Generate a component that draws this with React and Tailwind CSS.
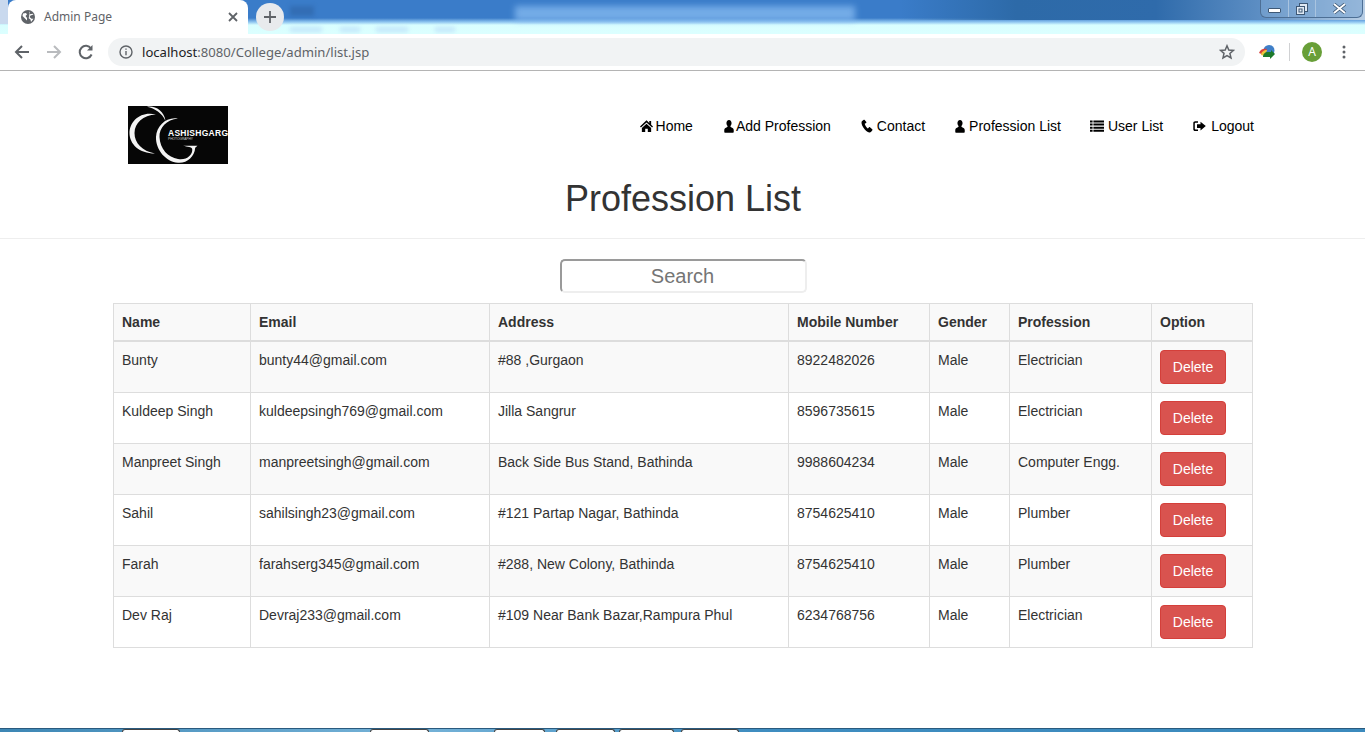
import React from "react";

const rows = [
  ["Bunty", "bunty44@gmail.com", "#88 ,Gurgaon", "8922482026", "Male", "Electrician"],
  ["Kuldeep Singh", "kuldeepsingh769@gmail.com", "Jilla Sangrur", "8596735615", "Male", "Electrician"],
  ["Manpreet Singh", "manpreetsingh@gmail.com", "Back Side Bus Stand, Bathinda", "9988604234", "Male", "Computer Engg."],
  ["Sahil", "sahilsingh23@gmail.com", "#121 Partap Nagar, Bathinda", "8754625410", "Male", "Plumber"],
  ["Farah", "farahserg345@gmail.com", "#288, New Colony, Bathinda", "8754625410", "Male", "Plumber"],
  ["Dev Raj", "Devraj233@gmail.com", "#109 Near Bank Bazar,Rampura Phul", "6234768756", "Male", "Electrician"],
];

const I = ({ children, w = 14, box = w }) => (
  <svg width={w} height="14" viewBox={`0 0 ${box} 14`} preserveAspectRatio="none" fill="#000" className="shrink-0">{children}</svg>
);
const Home = () => <I w={13} box={14}><path d="M7 1.300 0 7.500l1 1.100L7 3.400l6 5.200 1-1.100-2-1.800V2h-2v2Z" /><path d="M7 4.700 2 9v4h3.600V9.700h2.800V13H12V9Z" /></I>;
const User = () => <I w={10} box={11}><path d="M5.500 1C3.700 1 2.700 2.400 2.700 4.100c0 1.300.5 2.400 1.300 3 0 .6-.2.900-.8 1.100C1.700 8.800.3 9.300.3 11v2c0 .5.300.8.800.8h8.800c.5 0 .8-.3.800-.8v-2c0-1.700-1.400-2.200-2.900-2.800-.6-.2-.8-.5-.8-1.100.8-.6 1.300-1.700 1.300-3C8.300 2.400 7.300 1 5.500 1Z" /></I>;
const Phone = () => <I w={12} box={13}><path d="M3 .8.900 2.200C.2 3.300.5 5.700 2.500 8.500c2 2.900 4.500 4.700 6.400 4.900 1 .1 1.600-.2 2.100-.7l1.300-1.500c.3-.4.200-.7-.1-1L9.700 8.200c-.4-.2-.7-.2-1 .1L7.500 9.600C6.900 9.300 6 8.400 5.200 7.300 4.500 6.300 4.100 5.400 4 4.800l1.500-.9c.4-.2.500-.6.300-1L4 1.100C3.700.7 3.400.6 3 .8Z" /></I>;
const ListI = () => <I><path d="M0 1.500h2.600v2H0Zm3.400 0H14v2H3.400ZM0 4.600h2.600v2H0Zm3.400 0H14v2H3.400ZM0 7.700h2.600v2H0Zm3.400 0H14v2H3.400ZM0 10.800h2.600v2H0Zm3.400 0H14v2H3.400Z" /></I>;
const Logout = () => <I w={13}><path d="M5 2.200H2.200C1 2.200.3 3 .3 4v6.200c0 1 .7 1.800 1.900 1.800H5v-1.500H2.500c-.4 0-.7-.3-.7-.7V4.400c0-.4.300-.7.700-.7H5Z" /><path d="M7.500 2.800v2.500H4v3.600h3.500v2.500l5.300-4.300Z" /></I>;

const nav = [
  [Home, "Home", "gap-[3px] ml-[30px]"],
  [User, "Add Profession", "gap-[2px] ml-[31px]"],
  [Phone, "Contact", "gap-1 ml-[30px]"],
  [User, "Profession List", "gap-1 ml-[30px]"],
  [ListI, "User List", "gap-1 ml-[29px]"],
  [Logout, "Logout", "gap-[5px] ml-[30px]"],
];

const Logo = () => (
  <svg width="100" height="58" viewBox="0 0 100 58" className="block" role="img" aria-label="Ashish Garg Photography">
    <rect width="100" height="58" fill="#060606" />
    <path d="M28 8.500C13 4.500 1.500 15 1.500 27 1.500 38 11 47.500 27 47.500 14 45 6.500 37 6.500 27 6.500 17 15 9 28 8.500Z" fill="#f4f4f4" />
    <path d="M19 .8C27-.5 36 4.500 37.500 15 34 7 27 2.500 19 .8Z" fill="#f4f4f4" />
    <path d="M50 12.500C38 10.500 28.500 20 28 31 27.500 44 38 55.800 50 56.800 59 57.500 66.500 51 67.200 41.800L69.500 39.800H55C59.500 40.800 63.800 41 64.200 43 65 49 58.500 54.500 50 53 40 51.500 32 43 31.500 31 31 22 38.500 13.500 50 12.500Z" fill="#f4f4f4" />
    <text x="40" y="29.500" fill="#fff" fontSize="8.500" fontWeight="700" fontFamily="'Liberation Sans', sans-serif" textLength="60" lengthAdjust="spacing">ASHISHGARG</text>
    <text x="40" y="33.500" fill="#cfcfcf" fontSize="3.200" fontFamily="'Liberation Sans', sans-serif" textLength="25" lengthAdjust="spacingAndGlyphs">PHOTOGRAPHY</text>
  </svg>
);

const TopBar = () => (
  <div className="relative h-[34px] overflow-hidden bg-[linear-gradient(180deg,#3a7cc9_0px,#3a7cc9_18px,#8fc5f0_22px,#d9feff_25px,#dcffff_34px)]">
    <div className="absolute left-0 top-0 h-[24px] w-[8px] bg-[#c9d9ee]" />
    <div className="absolute left-[290px] top-[6px] h-[10px] w-[24px] bg-[#2c5f9f]/50 blur-[2px]" />
    <div className="absolute left-[515px] top-[6px] h-[15px] w-[340px] bg-[#8cc0f4] opacity-70 blur-[3px]" />
    <div className="absolute left-[290px] top-[27px] h-[5px] w-[32px] bg-[#c3e6fa] blur-[2px]" />
    <div className="absolute left-[340px] top-[27px] h-[5px] w-[20px] bg-[#c3e6fa] blur-[2px]" />
    <div className="absolute left-[376px] top-[27px] h-[5px] w-[32px] bg-[#c3e6fa] blur-[2px]" />
    <div className="absolute left-[435px] top-[27px] h-[5px] w-[20px] bg-[#c3e6fa] blur-[2px]" />
    <div className="absolute left-[900px] top-0 h-[20px] w-[465px] bg-[linear-gradient(90deg,rgba(43,106,170,0)_0%,#2d6aa8_25%,#2f6bab_55%,#5e8fc4_78%,#b9cfe6_100%)]" />
    <div className="absolute left-[8px] top-0 flex h-[34px] w-[240px] items-center rounded-t-lg bg-white pl-[13px] pr-[10px]">
      <svg width="14" height="14" viewBox="0 0 14 14" className="shrink-0">
        <circle cx="7" cy="7" r="7" fill="#5f6368" />
        <path d="M2 3.500 5 3l1 1.500L4.500 6l1.500 2v2.500L3.500 8l-2-2Zm7-2.300L8 3l1.500 1.200L11.500 3.800 12.500 4.500 9.500 5.500 8.500 7l2 1.800h2L10 12l-.5-2.500-1.800-1.200" fill="#fff" />
      </svg>
      <span className="ml-[9px] flex-1 font-['Noto_Sans',sans-serif] text-xs text-[#5f6368]">Admin Page</span>
      <svg width="10" height="10" viewBox="0 0 10 10" stroke="#5f6368" strokeWidth="1.800"><path d="M1 1l8 8M9 1 1 9" /></svg>
    </div>
    <div className="absolute left-[256px] top-[3px] flex size-[28px] items-center justify-center rounded-full bg-[#e8eaed]">
      <svg width="14" height="14" viewBox="0 0 14 14" stroke="#5f6368" strokeWidth="1.800"><path d="M7 1v12M1 7h12" /></svg>
    </div>
    <div className="absolute left-[1260px] top-0 flex h-[18px] w-[103px] rounded-b-md border border-t-0 border-[#4d6f95] bg-[#7da6d2]/60">
      <div className="flex w-[28px] items-center justify-center border-r border-[#a9c4e0]"><div className="mt-[4px] h-[5px] w-[13px] rounded-[1px] border border-[#3e5875] bg-white" /></div>
      <div className="flex w-[27px] items-center justify-center border-r border-[#a9c4e0]">
        <svg width="12" height="12" viewBox="0 0 12 12" fill="none" stroke="#3e5875"><rect x="3.500" y=".5" width="8" height="8" fill="#dfe9f4" /><rect x=".5" y="3.500" width="8" height="8" fill="#dfe9f4" /><rect x="3" y="6" width="3" height="3" /></svg>
      </div>
      <div className="flex flex-1 items-center justify-center">
        <svg width="13" height="11" viewBox="0 0 13 11"><path d="M1 1l11 9M12 1 1 10" stroke="#3e5875" strokeWidth="3.400" /><path d="M1 1l11 9M12 1 1 10" stroke="#fff" strokeWidth="1.800" /></svg>
      </div>
    </div>
  </div>
);

const Toolbar = () => (
  <div className="flex h-[37px] items-center border-b border-[#b4b4b4] bg-white">
    <svg width="16" height="16" viewBox="0 0 16 16" fill="none" stroke="#5f6368" strokeWidth="2" className="ml-[14px]"><path d="M15 8H2M8 2 2 8l6 6" /></svg>
    <svg width="16" height="16" viewBox="0 0 16 16" fill="none" stroke="#b9bbbe" strokeWidth="2" className="ml-[16px]"><path d="M1 8h13M8 2l6 6-6 6" /></svg>
    <svg width="16" height="16" viewBox="0 0 16 16" fill="none" stroke="#5f6368" strokeWidth="2" className="ml-[16px]"><path d="M13.600 10.500A6.200 6.200 0 1 1 13 4.500" /><path d="M14.500 1v5.500H9" fill="#5f6368" stroke="none" /></svg>
    <div className="ml-[14px] flex h-[28px] w-[1137px] items-center rounded-full bg-[#f1f3f4] pl-[11px] pr-[10px]">
      <svg width="14" height="14" viewBox="0 0 14 14" fill="none" stroke="#5f6368" strokeWidth="1.400"><circle cx="7" cy="7" r="6" /><path d="M7 6v4.200M7 3.500v1.300" /></svg>
      <span className="ml-[9px] flex-1 pt-px font-['Noto_Sans',sans-serif] text-[13.100px] text-[#5f6368]"><span className="text-[#202124]">localhost</span>:8080/College/admin/list.jsp</span>
      <svg width="16" height="16" viewBox="0 0 16 16" fill="none" stroke="#5f6368" strokeWidth="1.500"><path d="M8 1.800 9.800 6l4.600.4-3.500 3 1.100 4.500L8 11.500 4 13.900l1-4.500-3.500-3L6.200 6Z" /></svg>
    </div>
    <svg width="18" height="16" viewBox="0 0 18 16" className="ml-[13px]">
      <circle cx="11" cy="6.500" r="5.500" fill="#3f7fc8" />
      <path d="M1 9c1-4 5-5 8-4L6 11Z" fill="#d8433c" />
      <path d="M3 11c0-3 3-5 6-5l-2 6Z" fill="#f0c63d" />
      <path d="M5 13c0-3 2-5 5-5l3 0v-2l4 4-5 5v-2H9Z" fill="#1d7a2b" />
    </svg>
    <div className="ml-[13px] h-[18px] w-px bg-[#d0d1d3]" />
    <div className="ml-[12px] flex size-[20px] items-center justify-center rounded-full bg-[#689f38] font-['Noto_Sans',sans-serif] text-xs text-white">A</div>
    <svg width="4" height="14" viewBox="0 0 4 14" fill="#5f6368" className="ml-[20px]"><circle cx="2" cy="2" r="1.500" /><circle cx="2" cy="7" r="1.500" /><circle cx="2" cy="12" r="1.500" /></svg>
  </div>
);

const th = "border border-[#ddd] border-b-2 p-2 text-left font-bold leading-5 bg-[#f9f9f9]";
const td = "border border-[#ddd] p-2 align-top leading-5";

export default function App() {
  return (
    <div className="flex h-[732px] flex-col overflow-hidden bg-white font-['Liberation_Sans',Arial,sans-serif] text-sm text-[#333]">
      <TopBar />
      <Toolbar />
      <main className="flex-1">
        <div className="ml-[113px] mt-[35px] flex h-[58px] w-[1141px] items-start justify-between pl-[15px]">
          <Logo />
          <nav className="mt-[10px] flex text-black">
            {nav.map(([Icon, label, cls]) => (
              <a key={label} className={`flex h-5 items-center leading-5 ${cls}`}>
                <Icon />
                <span>{label}</span>
              </a>
            ))}
          </nav>
        </div>
        <h1 className="mt-[15px] pl-px text-center text-[36px] font-normal leading-10">Profession List</h1>
        <hr className="mt-[19px] border-t border-[#eee]" />
        <div className="mt-5 flex justify-center pl-[2px]">
          <input
            readOnly
            placeholder="Search"
            className="h-[34px] w-[247px] rounded-[5px] border-2 border-t-[#9a9a9a] border-l-[#9a9a9a] border-r-[#eeeeee] border-b-[#eeeeee] bg-white pr-[2px] text-center text-xl text-[#333] placeholder:text-[#757575]"
          />
        </div>
        <table className="ml-[113px] mt-[10px] w-[1139px] table-fixed border-collapse">
          <colgroup>
            <col className="w-[137px]" />
            <col className="w-[239px]" />
            <col className="w-[299px]" />
            <col className="w-[141px]" />
            <col className="w-[80px]" />
            <col className="w-[142px]" />
            <col className="w-[101px]" />
          </colgroup>
          <thead>
            <tr>
              {["Name", "Email", "Address", "Mobile Number", "Gender", "Profession", "Option"].map((h) => (
                <th key={h} className={th}>{h}</th>
              ))}
            </tr>
          </thead>
          <tbody>
            {rows.map((r, i) => (
              <tr key={r[0]} className={i % 2 === 0 ? "bg-[#f9f9f9]" : "bg-white"}>
                {r.map((c, j) => (
                  <td key={j} className={td}>{c}</td>
                ))}
                <td className={td}>
                  <button className="block h-[34px] w-[66px] rounded border border-[#d43f3a] bg-[#d9534f] text-center text-sm leading-5 text-white">Delete</button>
                </td>
              </tr>
            ))}
          </tbody>
        </table>
      </main>
      <div className="flex h-1 items-start border-t border-[#2a5a7e] bg-[linear-gradient(90deg,#3c86b4,#76b3d8_30%,#3f8dc0_55%,#3b8abd)]">
        <div className="ml-[122px] h-[3px] w-[58px] rounded-t-sm border border-b-0 border-[#444] bg-white" />
        <div className="ml-[190px] h-[3px] w-[59px] rounded-t-sm border border-b-0 border-[#444] bg-white" />
        <div className="ml-[65px] h-[3px] w-[51px] rounded-t-sm border border-b-0 border-[#444] bg-white" />
        <div className="ml-[11px] h-[3px] w-[59px] rounded-t-sm border border-b-0 border-[#444] bg-white" />
        <div className="ml-[4px] h-[3px] w-[55px] rounded-t-sm border border-b-0 border-[#444] bg-white" />
        <div className="ml-[7px] h-[3px] w-[58px] rounded-t-sm border border-b-0 border-[#444] bg-white" />
      </div>
    </div>
  );
}
